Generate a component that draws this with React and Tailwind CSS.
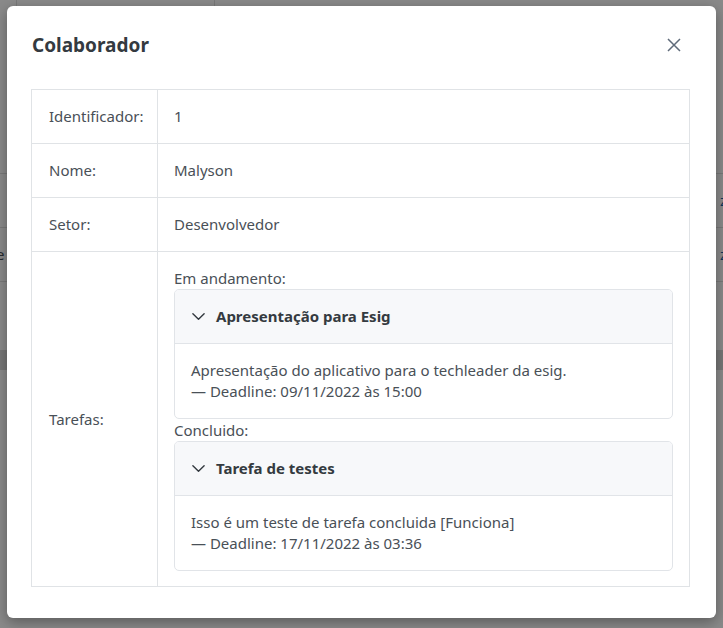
import React from 'react';

const tasks = {
  andamento: {
    title: 'Apresentação para Esig',
    desc: 'Apresentação do aplicativo para o techleader da esig.',
    deadline: '09/11/2022 às 15:00',
  },
  concluido: {
    title: 'Tarefa de testes',
    desc: 'Isso é um teste de tarefa concluida [Funciona]',
    deadline: '17/11/2022 às 03:36',
  },
};

const Chevron = () => (
  <svg width="15" height="15" viewBox="0 0 16 16" fill="none" stroke="#343a40" strokeWidth="1.5" strokeLinecap="round" strokeLinejoin="round">
    <path d="M2 5l6 6 6-6" />
  </svg>
);

const TaskCard = ({ task }) => (
  <div className="border border-[#e1e4e8] rounded-[5px] overflow-hidden">
    <div className="h-[54px] bg-[#f7f8fa] border-b border-[#e1e4e8] flex items-center pl-4 gap-[10px]">
      <Chevron />
      <span className="font-bold text-[#343a40] text-[15px]">{task.title}</span>
    </div>
    <div className="px-4 py-4 leading-[21px] text-[15px] text-[#495057]">
      <div>{task.desc}</div>
      <div>— Deadline: {task.deadline}</div>
    </div>
  </div>
);

const Row = ({ label, children, tall }) => (
  <tr className="border-b border-[#e0e3e6]">
    <td className="w-[126px] pl-[17px] border-r border-[#e0e3e6] align-middle h-[54px]">{label}</td>
    <td className={tall ? 'px-4 pt-[15px] pb-[15px]' : 'pl-[16px] align-middle'}>{children}</td>
  </tr>
);

export default function App() {
  return (
    <div className="relative w-full h-screen overflow-hidden bg-white" style={{ fontFamily: '"Noto Sans", sans-serif' }}>
      {/* page behind the modal */}
      <div className="h-full text-[15px] text-[#495057]">
        <div className="ml-[16px] h-[173px] border-l border-[#e0e0e0] flex">
          <div className="w-[198px] border-r border-[#e0e0e0]" />
        </div>
        <div className="h-[54px] border-t border-[#e0e0e0] flex justify-end items-center pr-0">
          <span className="text-[#1d5fa8] mr-[-4px]">z</span>
        </div>
        <div className="h-[54px] border-t border-[#e0e0e0] flex justify-between items-center">
          <span className="ml-[-4px]">e</span>
          <span className="text-[#1d5fa8] mr-[-4px]">z</span>
        </div>
        <div className="h-[69px] border-t border-[#e0e0e0]" />
        <div className="h-[20px] bg-[#dcdcdc]" />
      </div>

      {/* backdrop */}
      <div className="absolute inset-0 bg-black/[0.46]" />

      {/* modal */}
      <div className="absolute inset-0 flex justify-center">
        <div className="mt-[6px] w-[709px] h-[612px] bg-white rounded-[6px] shadow-[0_4px_14px_rgba(0,0,0,0.35)] px-[24px] pt-[24px]">
          <div className="h-[30px] flex items-center justify-between mb-[29px]">
            <h2 className="text-[19px] font-bold text-[#343a40] pl-[1px]">Colaborador</h2>
            <button className="mr-[11px] text-[#5f6b7a]">
              <svg width="14" height="14" viewBox="0 0 14 14" stroke="currentColor" strokeWidth="1.5" fill="none">
                <path d="M1 1l12 12M13 1 1 13" />
              </svg>
            </button>
          </div>

          <table className="w-[659px] border border-[#e0e3e6] border-collapse text-[15px] text-[#495057]">
            <tbody>
              <Row label="Identificador:">1</Row>
              <Row label="Nome:">Malyson</Row>
              <Row label="Setor:">Desenvolvedor</Row>
              <Row label="Tarefas:" tall>
                <div className="leading-[22px]">Em andamento:</div>
                <TaskCard task={tasks.andamento} />
                <div className="leading-[22px]">Concluido:</div>
                <TaskCard task={tasks.concluido} />
              </Row>
            </tbody>
          </table>
        </div>
      </div>
    </div>
  );
}
